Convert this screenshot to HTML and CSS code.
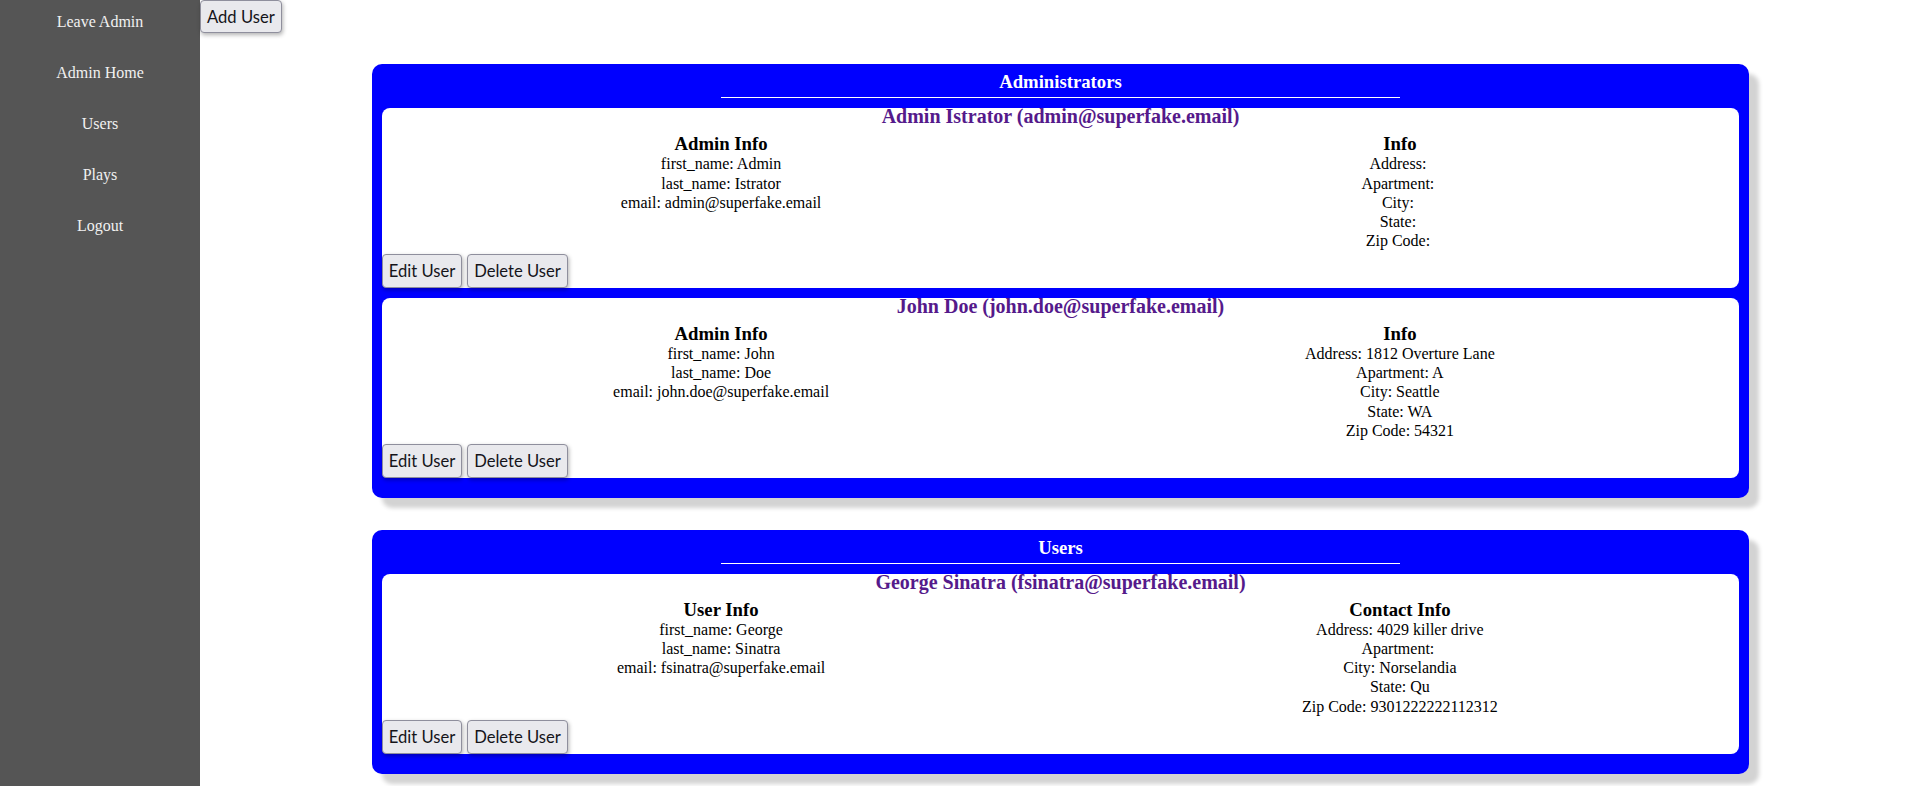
FILE: index.html
```html
<!DOCTYPE html>
<html lang="en">
<head>
<meta charset="utf-8">
<title>Admin - Users</title>
<link rel="stylesheet" href="styles.css">
</head>
<body>
<div class="layout">
  <nav class="sidebar">
    <a href="#">Leave Admin</a>
    <a href="#">Admin Home</a>
    <a href="#">Users</a>
    <a href="#">Plays</a>
    <a href="#">Logout</a>
  </nav>
  <main class="main">
    <div class="toolbar"><button class="btn">Add User</button></div>

    <section class="panel">
      <h2 class="panel-title">Administrators</h2>
      <hr class="panel-rule">
      <article class="card">
        <h3 class="card-name"><a href="#">Admin Istrator (admin@superfake.email)</a></h3>
        <div class="card-cols">
          <div class="col">
            <h4 class="col-title">Admin Info</h4>
            <p class="line">first_name: Admin</p>
            <p class="line">last_name: Istrator</p>
            <p class="line">email: admin@superfake.email</p>
          </div>
          <div class="col">
            <h4 class="col-title">Info</h4>
            <p class="line">Address: </p>
            <p class="line">Apartment: </p>
            <p class="line">City: </p>
            <p class="line">State: </p>
            <p class="line">Zip Code: </p>
          </div>
        </div>
        <div class="card-actions"><button class="btn">Edit User</button><button class="btn">Delete User</button></div>
      </article>
      <article class="card">
        <h3 class="card-name"><a href="#">John Doe (john.doe@superfake.email)</a></h3>
        <div class="card-cols">
          <div class="col">
            <h4 class="col-title">Admin Info</h4>
            <p class="line">first_name: John</p>
            <p class="line">last_name: Doe</p>
            <p class="line">email: john.doe@superfake.email</p>
          </div>
          <div class="col">
            <h4 class="col-title">Info</h4>
            <p class="line">Address: 1812 Overture Lane</p>
            <p class="line">Apartment: A</p>
            <p class="line">City: Seattle</p>
            <p class="line">State: WA</p>
            <p class="line">Zip Code: 54321</p>
          </div>
        </div>
        <div class="card-actions"><button class="btn">Edit User</button><button class="btn">Delete User</button></div>
      </article>
    </section>

    <section class="panel">
      <h2 class="panel-title">Users</h2>
      <hr class="panel-rule">
      <article class="card">
        <h3 class="card-name"><a href="#">George Sinatra (fsinatra@superfake.email)</a></h3>
        <div class="card-cols">
          <div class="col">
            <h4 class="col-title">User Info</h4>
            <p class="line">first_name: George</p>
            <p class="line">last_name: Sinatra</p>
            <p class="line">email: fsinatra@superfake.email</p>
          </div>
          <div class="col">
            <h4 class="col-title">Contact Info</h4>
            <p class="line">Address: 4029 killer drive</p>
            <p class="line">Apartment: </p>
            <p class="line">City: Norselandia</p>
            <p class="line">State: Qu</p>
            <p class="line">Zip Code: 9301222222112312</p>
          </div>
        </div>
        <div class="card-actions"><button class="btn">Edit User</button><button class="btn">Delete User</button></div>
      </article>
    </section>
  </main>
</div>
</body>
</html>
```

FILE: styles.css
```css
html, body {
  margin: 0;
  padding: 0;
  background: #ffffff;
}

body {
  font-family: "Liberation Serif", "Times New Roman", serif;
  font-size: 16px;
  color: #000000;
}

.layout {
  display: flex;
  min-height: 100vh;
}

.sidebar {
  flex: 0 0 200px;
  width: 200px;
  background: #555555;
  display: flex;
  flex-direction: column;
}

.sidebar a {
  display: block;
  padding: 12px 0 20px;
  line-height: 19px;
  font-size: 16px;
  text-align: center;
  color: #f1f1f1;
  text-decoration: none;
}

.main {
  flex: 1 1 auto;
  min-width: 0;
}

.toolbar {
  display: flex;
  height: 33px;
  margin-bottom: 31px;
}

.btn {
  font-family: "Lato", "Noto Sans", sans-serif;
  font-size: 16.6px;
  line-height: 20px;
  color: #15141a;
  background: #e9e9ed;
  border: 1px solid #8f8f9d;
  border-radius: 4px;
  padding: 6px 6px;
  margin: 0;
  box-shadow: 1px 2px 4px rgba(0, 0, 0, 0.3);
  cursor: pointer;
}

.toolbar .btn {
  height: 33px;
  padding-top: 5px;
  padding-bottom: 5px;
}

.panel {
  margin: 0 0 32px 10%;
  width: calc(80% + 4px);
  box-sizing: border-box;
  padding: 7px 10px 20px;
  background: #0000ff;
  border-radius: 10px;
  box-shadow: 10px 10px 4px #d3d3d3;
  display: flow-root;
}

.panel:last-child {
  margin-bottom: 0;
}

.panel-title {
  margin: 0;
  font-size: 18.72px;
  line-height: 22px;
  font-weight: bold;
  text-align: center;
  color: #ffffff;
}

.panel-rule {
  width: 50%;
  height: 0;
  margin: 4px auto 10px;
  border: 0;
  border-top: 1px solid #ffffff;
}

.card {
  background: #ffffff;
  border-radius: 8px;
  margin-bottom: 10px;
  display: flow-root;
}

.card:last-child {
  margin-bottom: 0;
}

.card-name {
  margin: 0 0 8px;
  font-size: 20px;
  line-height: 17px;
  font-weight: bold;
  text-align: center;
}

.card-name a {
  color: #551a8b;
  text-decoration: none;
}

.card-cols {
  display: flex;
  align-items: flex-start;
}

.col {
  flex: 1 1 0;
  text-align: center;
}

.col-title {
  margin: 0;
  font-size: 18.72px;
  line-height: 21.4px;
  font-weight: bold;
}

.line {
  margin: 0;
  line-height: 19.1px;
  white-space: pre;
}

.card-actions {
  display: flex;
  gap: 5px;
  margin-top: 4px;
}
```
